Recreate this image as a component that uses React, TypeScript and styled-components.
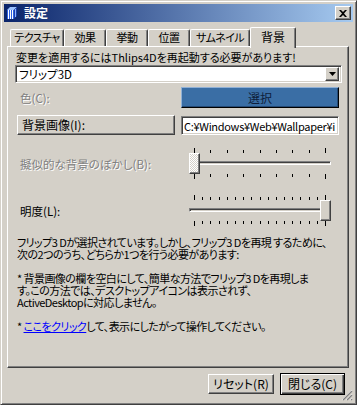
import React from 'react';
import styled, { createGlobalStyle, css } from 'styled-components';

const FACE = '#d4d0c8';
const HILITE = '#ffffff';
const SHADOW = '#808080';
const DARK = '#404040';

const GlobalStyle = createGlobalStyle`
  html, body {
    margin: 0;
    padding: 0;
    background: ${FACE};
  }
  body {
    font-family: "Noto Sans CJK JP", "Liberation Sans", sans-serif;
    font-size: 11px;
    font-feature-settings: "palt";
    color: #000;
  }
`;

const raisedButton = css`
  box-sizing: border-box;
  border: 1px solid;
  border-color: ${HILITE} ${DARK} ${DARK} ${HILITE};
  box-shadow: inset -1px -1px ${SHADOW};
  background: ${FACE};
`;

const sunkenField = css`
  box-sizing: border-box;
  border: 1px solid;
  border-color: ${SHADOW} ${HILITE} ${HILITE} ${SHADOW};
  box-shadow: inset 1px 1px ${DARK}, inset -1px -1px ${FACE};
`;

const disabledText = css`
  color: ${SHADOW};
  text-shadow: 1px 1px ${HILITE};
`;

const Window = styled.div`
  position: relative;
  box-sizing: border-box;
  width: 357px;
  height: 405px;
  display: flex;
  flex-direction: column;
  padding: 3px;
  border: 1px solid;
  border-color: ${FACE} ${DARK} ${DARK} ${FACE};
  box-shadow: inset 1px 1px ${HILITE}, inset -1px -1px ${SHADOW};
  background: ${FACE};
`;

const TitleBar = styled.div`
  height: 18px;
  flex-shrink: 0;
  display: flex;
  align-items: center;
  padding: 0 2px;
  background: linear-gradient(to right, #0a246a, #a6caf0);
`;

const TitleText = styled.span`
  margin-left: 6px;
  color: #fff;
  font-weight: bold;
  font-size: 12px;
  line-height: 18px;
  flex: 1;
`;

const CloseButton = styled.div`
  ${raisedButton};
  width: 16px;
  height: 14px;
  display: flex;
  align-items: center;
  justify-content: center;
`;

const TabStrip = styled.div`
  margin-top: 5px;
  height: 19px;
  flex-shrink: 0;
  display: flex;
  align-items: flex-end;
  padding-left: 6px;
`;

const Tab = styled.div<{ $width: number; $active?: boolean }>`
  position: relative;
  box-sizing: border-box;
  width: ${(p) => p.$width}px;
  height: ${(p) => (p.$active ? 21 : 17)}px;
  margin-bottom: ${(p) => (p.$active ? -2 : 0)}px;
  z-index: ${(p) => (p.$active ? 1 : 0)};
  border-left: 1px solid ${HILITE};
  border-top: 1px solid ${HILITE};
  border-right: 1px solid ${DARK};
  border-radius: 2px 2px 0 0;
  box-shadow: inset -1px 0 ${SHADOW};
  background: ${FACE};
  text-align: center;
  font-size: ${(p) => (p.$active ? 12 : 11)}px;
  letter-spacing: ${(p) => (p.$active ? 0 : -0.6)}px;
  line-height: ${(p) => (p.$active ? 17 : 15)}px;
  white-space: nowrap;
`;

const Panel = styled.div`
  flex: 1;
  display: flex;
  flex-direction: column;
  margin: 0 4px 0 3px;
  padding: 4px 6px 0 7px;
  border-top: 1px solid ${HILITE};
  border-left: 1px solid ${HILITE};
  border-right: 1px solid ${DARK};
  border-bottom: 1px solid ${DARK};
  box-shadow: inset -1px -1px ${SHADOW};
`;

const Notice = styled.div`
  height: 13px;
  line-height: 13px;
  padding-left: 1px;
  white-space: nowrap;
`;

const Combo = styled.div`
  ${sunkenField};
  margin-top: 1px;
  width: 327px;
  height: 18px;
  background: #fff;
  display: flex;
  align-items: center;
  padding: 2px 2px 2px 3px;
`;

const ComboValue = styled.span`
  flex: 1;
  line-height: 14px;
  font-size: 11.5px;
`;

const ComboArrow = styled.div`
  ${raisedButton};
  width: 14px;
  height: 14px;
  display: flex;
  align-items: center;
  justify-content: center;
`;

const Row = styled.div<{ $top: number; $height: number }>`
  display: flex;
  align-items: center;
  margin-top: ${(p) => p.$top}px;
  height: ${(p) => p.$height}px;
`;

const FieldLabel = styled.span<{ $disabled?: boolean }>`
  width: 161px;
  padding-left: 5px;
  white-space: nowrap;
  font-size: 11.5px;
  ${(p) => p.$disabled && disabledText};
`;

const PickButton = styled.div`
  box-sizing: border-box;
  width: 158px;
  height: 21px;
  border: 1px solid;
  border-color: #8fb0d6 #000 #000 #8fb0d6;
  box-shadow: inset -1px -1px #244a76;
  background: #3a6ea5;
  color: #0e1e3c;
  text-align: center;
  line-height: 19px;
  font-size: 12px;
`;

const WideButton = styled.div`
  ${raisedButton};
  margin-left: 2px;
  width: 158px;
  height: 20px;
  line-height: 18px;
  padding-left: 4px;
  font-size: 12px;
`;

const PathField = styled.div`
  ${sunkenField};
  margin-left: 6px;
  width: 158px;
  height: 19px;
  background: #fff;
  padding: 2px 0 0 2px;
  line-height: 15px;
  font-size: 11px;
  letter-spacing: -0.3px;
  white-space: nowrap;
  overflow: hidden;
`;

const SliderBox = styled.div`
  margin-left: 7px;
  width: 143px;
  display: flex;
  flex-direction: column;
`;

const TickRow = styled.div<{ $bottom?: boolean }>`
  height: 5px;
  display: flex;
  justify-content: space-between;
  align-items: ${(p) => (p.$bottom ? 'flex-start' : 'flex-end')};
  padding: 0 5px 0 6px;
`;

const Tick = styled.span<{ $long?: boolean }>`
  width: 1px;
  height: ${(p) => (p.$long ? 5 : 3)}px;
  background: #000;
`;

const TrackArea = styled.div`
  position: relative;
  height: 21px;
`;

const Track = styled.div`
  box-sizing: border-box;
  margin: 8px 0 0 1px;
  height: 4px;
  border: 1px solid;
  border-color: ${SHADOW} ${HILITE} ${HILITE} ${SHADOW};
  box-shadow: inset 1px 1px ${DARK};
  background: ${FACE};
`;

const Thumb = styled.div<{ $disabled?: boolean }>`
  ${raisedButton};
  position: absolute;
  top: 0;
  width: 11px;
  height: 21px;
  ${(p) =>
    p.$disabled &&
    css`
      background: repeating-conic-gradient(#fff 0 25%, ${FACE} 0 50%) 0 0 / 2px 2px;
    `};
`;

const Message = styled.div`
  margin-top: 10px;
  padding-left: 2px;
  font-size: 11px;
  letter-spacing: -0.55px;
  line-height: 12px;
  white-space: nowrap;
`;

const Link = styled.a`
  color: #0000ff;
  text-decoration: underline;
`;

const Footer = styled.div`
  height: 32px;
  flex-shrink: 0;
  display: flex;
  justify-content: flex-end;
  align-items: center;
  gap: 6px;
  padding: 0 8px 1px 0;
`;

const DialogButton = styled.div<{ $default?: boolean }>`
  box-sizing: border-box;
  width: ${(p) => (p.$default ? 65 : 66)}px;
  height: ${(p) => (p.$default ? 22 : 20)}px;
  background: ${FACE};
  text-align: center;
  font-size: 12px;
  line-height: ${(p) => (p.$default ? 20 : 18)}px;
  ${(p) =>
    p.$default
      ? css`
          border: 1px solid #000;
          box-shadow: inset 1px 1px ${HILITE}, inset -1px -1px ${DARK}, inset -2px -2px ${SHADOW};
        `
      : css`
          border: 1px solid;
          border-color: ${HILITE} ${DARK} ${DARK} ${HILITE};
          box-shadow: inset -1px -1px ${SHADOW};
        `};
`;

const Grip = styled.svg`
  position: absolute;
  right: 3px;
  bottom: 3px;
`;

const AppIcon = () => (
  <svg width="12" height="12" viewBox="0 0 12 12">
    <polygon points="1,3 4,0 11,0 8,3" fill="#9cc2ff" />
    <polygon points="8,3 11,0 11,9 8,12" fill="#1c3fa8" />
    <rect x="1" y="3" width="7" height="9" fill="#2d5fe0" />
    <rect x="2" y="3" width="1" height="9" fill="#ffffff" />
    <rect x="4" y="3" width="1" height="9" fill="#ffffff" />
    <rect x="6" y="3" width="1" height="9" fill="#ffffff" />
    <rect x="9" y="2" width="1" height="8" fill="#8fb4ff" />
  </svg>
);

const CloseIcon = () => (
  <svg width="8" height="7" viewBox="0 0 8 7">
    <path d="M0 0h2l2 2 2-2h2L5 3.5 8 7H6L4 5 2 7H0l3-3.5z" fill="#000" />
  </svg>
);

const DownArrow = () => (
  <svg width="7" height="4" viewBox="0 0 7 4">
    <polygon points="0,0 7,0 3.5,4" fill="#000" />
  </svg>
);

interface SliderProps {
  ticks: number;
  position: number;
  disabled?: boolean;
}

const Slider: React.FC<SliderProps> = ({ ticks, position, disabled }) => {
  const marks = Array.from({ length: ticks }, (_, i) => i);
  return (
    <SliderBox>
      <TickRow>
        {marks.map((i) => (
          <Tick key={i} $long={i === 0 || i === ticks - 1} />
        ))}
      </TickRow>
      <TrackArea>
        <Track />
        <Thumb $disabled={disabled} style={{ left: position }} />
      </TrackArea>
      <TickRow $bottom>
        {marks.map((i) => (
          <Tick key={i} $long={i === 0 || i === ticks - 1} />
        ))}
      </TickRow>
    </SliderBox>
  );
};

const tabs = [
  { label: 'テクスチャ', width: 54 },
  { label: '効果', width: 42 },
  { label: '挙動', width: 42 },
  { label: '位置', width: 42 },
  { label: 'サムネイル', width: 60 },
  { label: '背景', width: 46, active: true },
];

export default function App() {
  return (
    <>
      <GlobalStyle />
      <Window>
        <TitleBar>
          <AppIcon />
          <TitleText>設定</TitleText>
          <CloseButton>
            <CloseIcon />
          </CloseButton>
        </TitleBar>

        <TabStrip>
          {tabs.map((t) => (
            <Tab key={t.label} $width={t.width} $active={t.active}>
              {t.label}
            </Tab>
          ))}
        </TabStrip>

        <Panel>
          <Notice>変更を適用するにはThlips4Dを再起動する必要があります!</Notice>
          <Combo>
            <ComboValue>フリップ3D</ComboValue>
            <ComboArrow>
              <DownArrow />
            </ComboArrow>
          </Combo>

          <Row $top={4} $height={21}>
            <FieldLabel $disabled>色(C):</FieldLabel>
            <PickButton>選択</PickButton>
          </Row>

          <Row $top={7} $height={20}>
            <WideButton>背景画像(I):</WideButton>
            <PathField>C:¥Windows¥Web¥Wallpaper¥i</PathField>
          </Row>

          <Row $top={13} $height={31}>
            <FieldLabel $disabled>擬似的な背景のぼかし(B):</FieldLabel>
            <Slider ticks={9} position={1} disabled />
          </Row>

          <Row $top={16} $height={31}>
            <FieldLabel>明度(L):</FieldLabel>
            <Slider ticks={17} position={132} />
          </Row>

          <Message>
            フリップ3 Dが選択されています。しかし、フリップ3 Dを再現 するために、
            <br />
            次の2つのうち、どちらか1つを行う必要があります:
            <br />
            <br />
            * 背景画像の欄を空白にして、簡単な方法でフリップ3 Dを再現しま
            <br />
            す。この方法では、デスクトップアイコンは表示されず、
            <br />
            ActiveDesktopに対応しません。
            <br />
            <br />
            * <Link href="#">ここをクリック</Link>して、表示にしたがって操作してください。
          </Message>
        </Panel>

        <Footer>
          <DialogButton>リセット(R)</DialogButton>
          <DialogButton $default>閉じる(C)</DialogButton>
        </Footer>

        <Grip width="12" height="12" viewBox="0 0 12 12">
          <path d="M11 1L1 11M11 5L5 11M11 9L9 11" stroke="#fff" strokeWidth="1" />
          <path d="M11 2L2 11M11 6L6 11M11 10L10 11" stroke={SHADOW} strokeWidth="1.4" />
        </Grip>
      </Window>
    </>
  );
}
